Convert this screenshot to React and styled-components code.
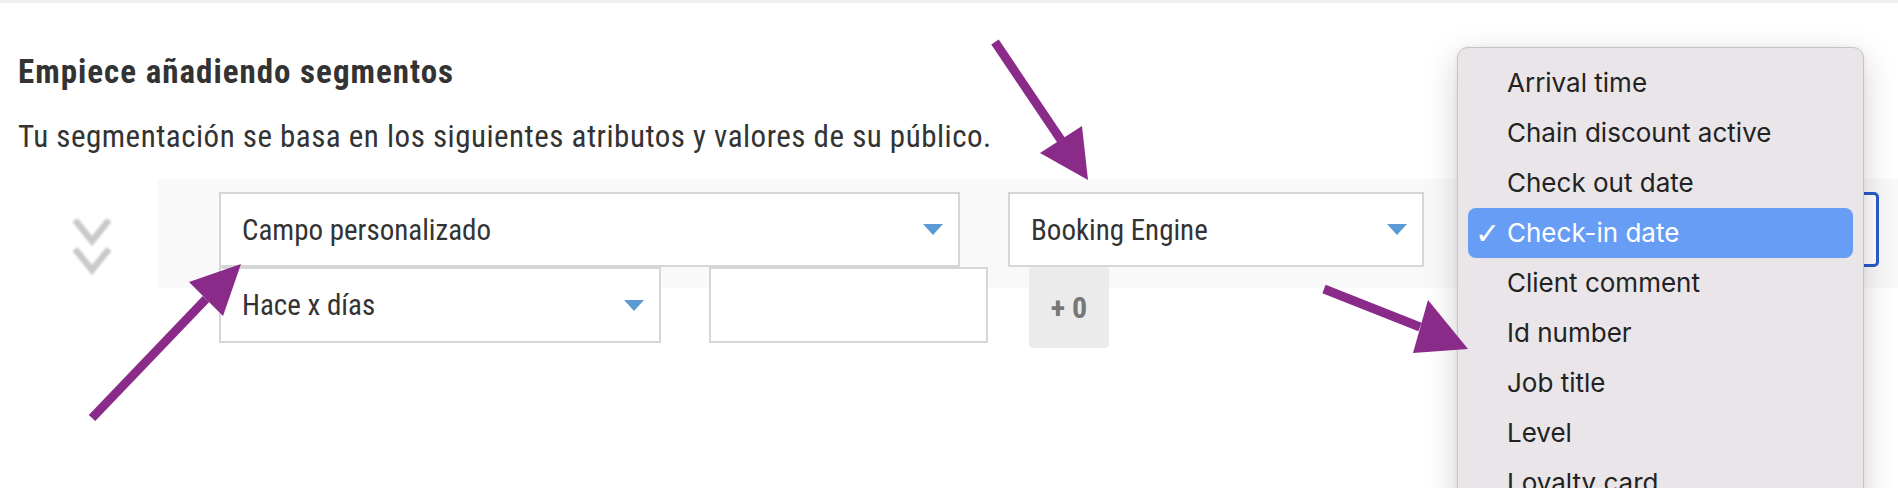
import React from 'react'
import styled, { createGlobalStyle } from 'styled-components'

const GlobalStyle = createGlobalStyle`
  html, body {
    margin: 0;
    padding: 0;
    background: #fff;
    height: 488px;
    overflow: hidden;
  }
  #root {
    position: relative;
    height: 488px;
  }
`

const font = `"Roboto Condensed", Roboto, "Liberation Sans", sans-serif`

const TopBar = styled.div`
  height: 3px;
  background: #f0f0f0;
`

const Content = styled.div`
  padding: 49px 0 0 18px;
  font-family: ${font};
  color: #333;
`

const Heading = styled.h2`
  margin: 0 0 25px;
  font-size: 33px;
  line-height: 40px;
  font-weight: 700;
  letter-spacing: 1px;
`

const Lead = styled.p`
  margin: 0 0 22px;
  font-size: 31px;
  line-height: 40px;
  letter-spacing: 0.5px;
`

const Segment = styled.div`
  display: flex;
`

const Handle = styled.div`
  width: 140px;
  flex: none;
  padding: 40px 0 0 54px;
  box-sizing: border-box;

  svg {
    display: block;
    filter: blur(0.8px);
  }
`

const Panel = styled.div`
  flex: 1;
  height: 109px;
  background: #f9f9f9;
  padding: 13px 0 0 61px;
  box-sizing: border-box;
`

const Row = styled.div`
  display: flex;
  align-items: flex-start;
  gap: ${p => p.$gap || 48}px;
`

const Select = styled.div`
  display: flex;
  align-items: center;
  justify-content: space-between;
  width: ${p => p.$w}px;
  height: ${p => p.$h || 75}px;
  margin-left: ${p => p.$ml || 0}px;
  padding: 0 15px 0 21px;
  box-sizing: border-box;
  background: #fff;
  border: ${p => p.$focus ? '3px solid #2a5cc6' : '2px solid #d6d6d6'};
  border-radius: ${p => p.$focus ? '5px' : '0'};
  font-size: 29px;
  color: #333;
  flex: none;
`

const Caret = styled.span`
  width: 0;
  height: 0;
  margin-left: auto;
  border-left: 10px solid transparent;
  border-right: 10px solid transparent;
  border-top: 11px solid #5a9bd5;
`

const TextInput = styled.input`
  width: 279px;
  height: 76px;
  box-sizing: border-box;
  border: 2px solid #d6d6d6;
  background: #fff;
  outline: none;
  flex: none;
`

const CountButton = styled.button`
  width: 80px;
  height: 81px;
  margin-left: -7px;
  border: none;
  border-radius: 4px;
  background: #ebebeb;
  color: #777;
  font-family: ${font};
  font-size: 30px;
  font-weight: 700;
  padding: 0;
  flex: none;
`

const Menu = styled.div`
  position: absolute;
  left: 1457px;
  top: 47px;
  width: 407px;
  box-sizing: border-box;
  padding: 10px 10px 20px;
  background: #e9e5e8;
  border: 1px solid #c6c3c6;
  border-radius: 11px;
  box-shadow: 0 10px 34px rgba(0, 0, 0, 0.18), 0 0 4px rgba(0, 0, 0, 0.06);
  font-family: Inter, "Noto Sans", sans-serif;
  z-index: 2;
`

const MenuItem = styled.div`
  position: relative;
  height: 50px;
  line-height: 50px;
  padding-left: 39px;
  border-radius: 8px;
  font-size: 26px;
  color: ${p => p.$active ? '#fff' : '#222'};
  background: ${p => p.$active ? '#689df6' : 'transparent'};
  white-space: nowrap;
`

const Check = styled.span`
  position: absolute;
  left: 7px;
  top: 1px;
  font-size: 30px;
  font-family: "DejaVu Sans", sans-serif;
`

const Annotations = styled.svg`
  position: absolute;
  left: 0;
  top: 0;
  z-index: 3;
  pointer-events: none;
`

const options = [
  'Arrival time',
  'Chain discount active',
  'Check out date',
  'Check-in date',
  'Client comment',
  'Id number',
  'Job title',
  'Level',
  'Loyalty card',
]

// tail, base centre, head corners, tip
const arrows = [
  { tail: [995, 42], base: [1061, 140], head: '1040,153 1082,126 1088,180' },
  { tail: [92, 418], base: [206, 299], head: '189,282 241,264 223,316' },
  { tail: [1324, 289], base: [1420, 327], head: '1428,300 1468,349 1413,353' },
]

const Chevrons = () => (
  <svg width="40" height="56" viewBox="0 0 40 56">
    <g fill="none" stroke="#c9c9c9" strokeWidth="6.5" strokeLinejoin="miter">
      <polyline points="3,1 20,22 37,1" />
      <polyline points="3,30 20,51 37,30" />
    </g>
  </svg>
)

export default function App() {
  return (
    <>
      <GlobalStyle />
      <TopBar />
      <Content>
        <Heading>Empiece añadiendo segmentos</Heading>
        <Lead>Tu segmentación se basa en los siguientes atributos y valores de su público.</Lead>
        <Segment>
          <Handle><Chevrons /></Handle>
          <Panel>
            <Row $gap={48}>
              <Select $w={741}>Campo personalizado<Caret /></Select>
              <Select $w={416}>Booking Engine<Caret /></Select>
              <Select $w={416} $ml={-9} $focus><Caret /></Select>
            </Row>
            <Row $gap={48}>
              <Select $w={442} $h={76}>Hace x días<Caret /></Select>
              <TextInput />
              <CountButton>+ 0</CountButton>
            </Row>
          </Panel>
        </Segment>
      </Content>

      <Menu>
        {options.map(o => (
          <MenuItem key={o} $active={o === 'Check-in date'}>
            {o === 'Check-in date' && <Check>✓</Check>}
            {o}
          </MenuItem>
        ))}
      </Menu>

      <Annotations width="1898" height="488">
        {arrows.map((a, i) => (
          <g key={i} fill="#8a2b8a" stroke="#8a2b8a">
            <line x1={a.tail[0]} y1={a.tail[1]} x2={a.base[0]} y2={a.base[1]} strokeWidth="9" />
            <polygon points={a.head} stroke="none" />
          </g>
        ))}
      </Annotations>
    </>
  )
}
